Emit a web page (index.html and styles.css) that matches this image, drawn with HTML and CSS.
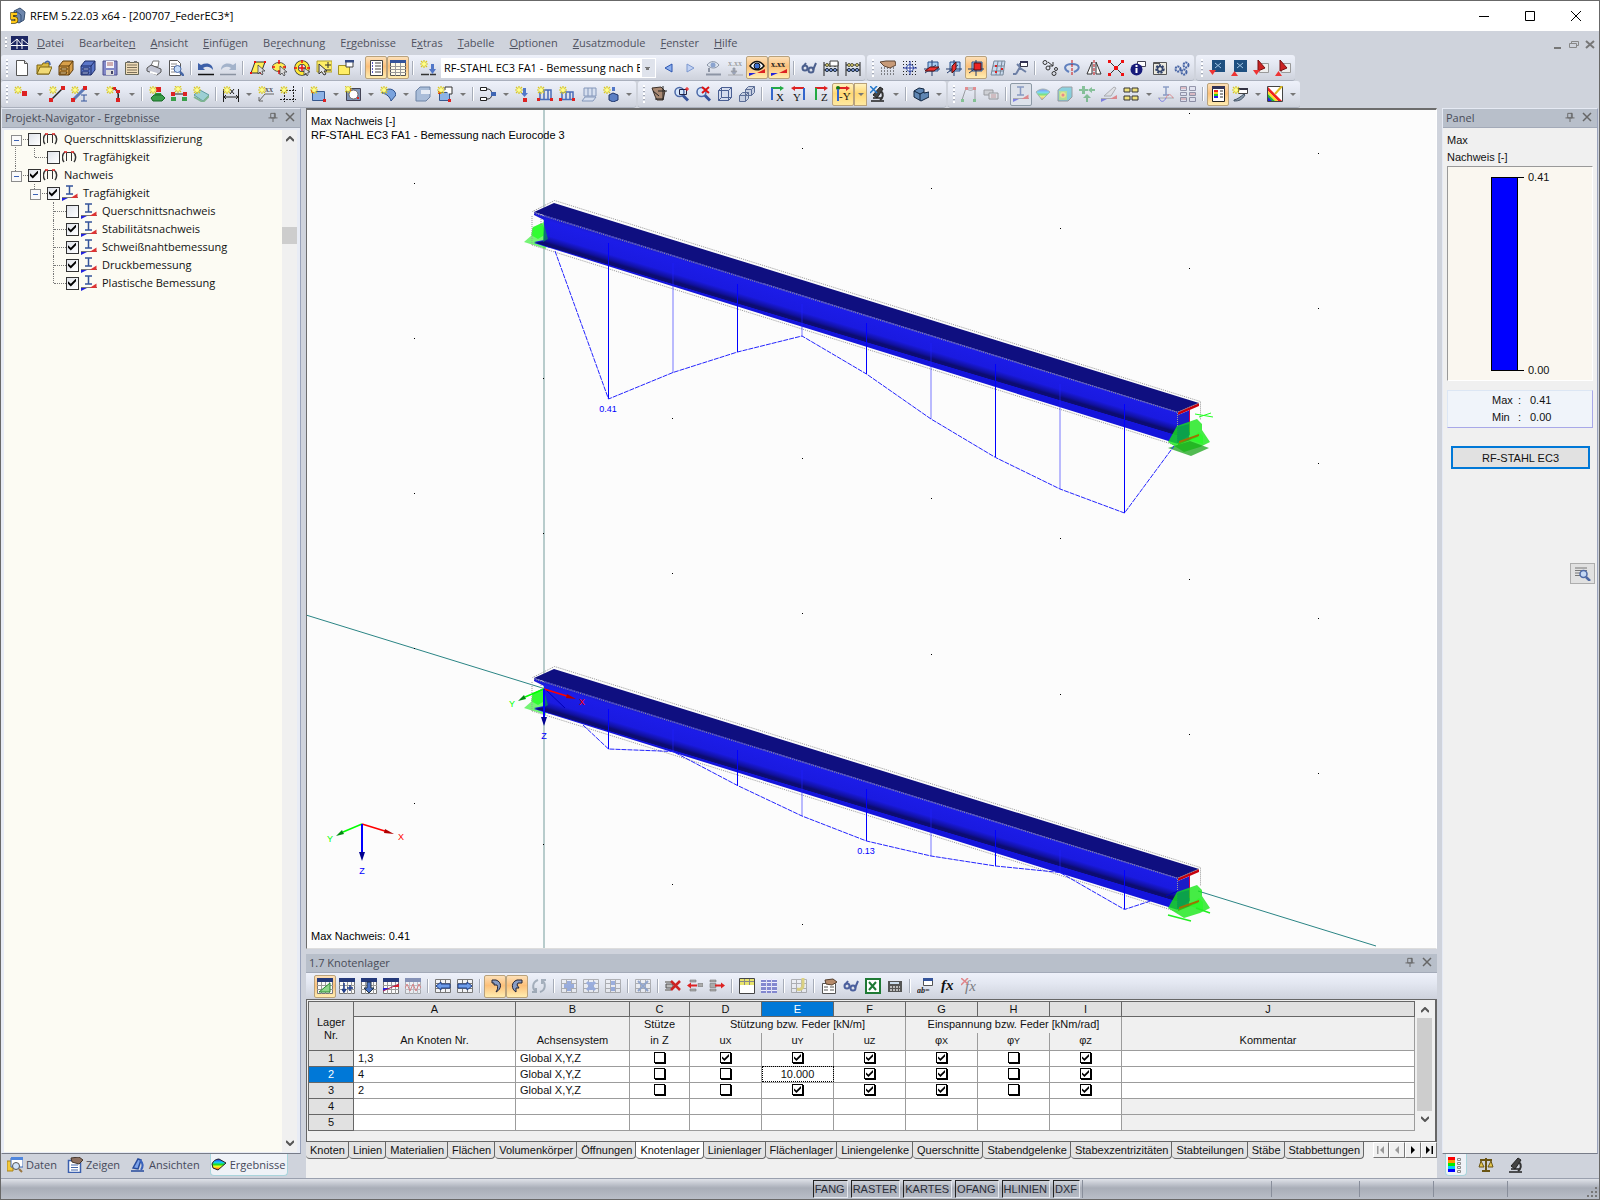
FILE: index.html
```html
<!DOCTYPE html>
<html lang="de">
<head>
<meta charset="utf-8">
<title>RFEM 5.22.03 x64 - [200707_FederEC3*]</title>
<link rel="stylesheet" href="styles.css">
</head>
<body>
<svg class="defs" aria-hidden="true">
  <defs>
    <g id="star"><path d="M4 0v8M0 4h8M1 1l6 6M7 1L1 7" stroke="#d9c81e" stroke-width="1.2"/><circle cx="4" cy="4" r="2" fill="#ffff8a"/></g>
    <g id="tbl"><path d="M.5.5h15v15H.5z" fill="#fafafa" stroke="#777"/><path d="M0 7.5h16M0 11.5h16M4.500 4v12M8.500 4v12M12.500 4v12" stroke="#999"/><path d="M0 0h16v4H0z" fill="#24397a"/></g>
    <g id="grd"><path d="M.5 1.500h15v13H.5zM.5 5.500h15M.5 10.500h15M5.500 1.500v13M10.500 1.500v13" fill="#f2f3f6" stroke="#777"/></g>
    <g id="lens"><circle cx="6.500" cy="6" r="4.500" fill="#d5e6fb" stroke="#4c69a8" stroke-width="1.500"/><path d="M10 9.500l5 5" stroke="#35529b" stroke-width="3"/></g>
    <g id="abacus"><path d="M1 2v14M15 2v14M1 5h14M1 10h14" stroke="#222" fill="none"/><g fill="#e8d76a" stroke="#554"><circle cx="4" cy="5" r="1.500"/><circle cx="7" cy="5" r="1.500"/><circle cx="12" cy="5" r="1.500"/></g><g fill="#7c95dc" stroke="#234"><circle cx="4" cy="10" r="1.600"/><circle cx="8" cy="10" r="1.600"/><circle cx="12" cy="10" r="1.600"/></g></g>
    <g id="nachweis"><path d="M4 1h7M7.500 1v8M4 9h7" stroke="#34549b" stroke-width="1.500"/><path d="M0 12.500h16" stroke="#777"/><path d="M0 16v-3h6z" fill="#22d"/><path d="M15.500 8.500V13h-7z" fill="#d33"/></g>
    <g id="klasse"><path d="M2 13C-.5 10 0 5 3 3M12 13c2.500-3 2-8-1-10" fill="none" stroke="#333" stroke-width="1.500"/><path d="M4.500 12V3.500h5V12" fill="none" stroke="#333"/><path d="M2 3h3M9 3h3" stroke="#d22" stroke-width="1.500"/></g>
    <g id="plane"><path d="M4 2h10v9H4z" fill="#a9cdf0" stroke="#28538f"/><path d="M1 13L12 5M8 0v16M0 9h16" stroke="#223a6b"/></g>
    <g id="pin"><path d="M2.500 1.500h5v5h-5zM0 6.500h10M5 7v4M6.500 1v5" fill="none" stroke="#666"/></g>
    <g id="cross"><path d="M1 1l8 8M9 1L1 9" stroke="#666" stroke-width="1.500"/></g>
    <g id="micro"><path d="M1 15h13M3 12h9" stroke="#222" stroke-width="1.500"/><path d="M3 9l7-8 3 2-6 9z" fill="#444" stroke="#222"/><path d="M11 5c3 3 2 7-1 9" fill="none" stroke="#333" stroke-width="2"/></g>
    <g id="ucs"><path d="M0 0l-19 8" stroke="#0f0" stroke-width="1.500"/><path d="M-26 12l6-6 2 4z" fill="#008c10"/><path d="M0 0l26 8" stroke="#f00" stroke-width="1.500"/><path d="M32 10l-9-5-1 4z" fill="#b00000"/><path d="M0 0v30" stroke="#00f" stroke-width="2"/><path d="M0 37l-3-9h6z" fill="#000090"/></g>
    <linearGradient id="web" gradientUnits="userSpaceOnUse" x1="534" y1="212" x2="525" y2="242"><stop offset="0" stop-color="#1a1acc"/><stop offset=".15" stop-color="#1c1ce8"/><stop offset=".6" stop-color="#1a1ae0"/><stop offset=".76" stop-color="#1111a0"/><stop offset=".84" stop-color="#0c0c70"/><stop offset=".92" stop-color="#0c0c74"/><stop offset=".94" stop-color="#1414dc"/><stop offset="1" stop-color="#1414dc"/></linearGradient>
    <linearGradient id="rainbow" y2="1" x2="0"><stop offset="0" stop-color="#22e"/><stop offset=".3" stop-color="#1cf"/><stop offset=".5" stop-color="#2d2"/><stop offset=".7" stop-color="#ff2"/><stop offset="1" stop-color="#f22"/></linearGradient>
    <g id="beam">
      <path d="M532 216v29M541 219v8" stroke="#999" stroke-dasharray="1 1"/>
      <path d="M534 212l10 4v4l-10-5zM534 242l10-2 6 8z" fill="#1a1ad8"/>
      <path d="M544 215l634 197v32L534 243l10-2z" fill="url(#web)"/>
      <path d="M534 212l20-9 645 200-21 9z" fill="#0f0f80"/>
      <path d="M1178 412l21-9v3l-21 9zM1178 443l20-8v2l-20 8z" fill="#c8000c"/>
      <path d="M1178 415l12-5v25l-12 8z" fill="#1c1cc8"/>
      <path d="M1189.500 410v22" stroke="#d0004a"/>
      <path d="M532.500 211.500l22-11 646 201v18M1177.500 444V412.500L534 213M1178 412l21-9M532 245l646 201" fill="none" stroke="#999" stroke-dasharray="1 1"/>
    </g>
    <g id="supl"><path d="M524 242l8-7 0-7 12-6 4 18-2 9z" fill="#2df02d" opacity=".65"/><path d="M533 227l9-4 4 11-8 5-7-4z" fill="#22ff22" opacity=".8"/></g>
    <g id="supl2"><path d="M544 224l4 15-5 3z" fill="#0a8a60" opacity=".8"/></g>
    <g id="supr"><path d="M1177 426l20-7 5 5v6l8 12-10 5-16 5-16-10z" fill="#16e716" opacity=".8"/><path d="M1177 427l12-3v16l-12 3z" fill="#0a9a50" opacity=".8"/><path d="M1190 440l9-8 4 4v8z" fill="#20ff20" opacity=".6"/><path d="M1179 441l20-7v2l-20 7z" fill="#a07000"/></g>
  </defs>
</svg>
<div class="app">
  <header class="title">
    <svg class="logo" viewBox="0 0 18 18"><path d="M5 4l6-3 5 4-1 8-5 3-4-2z" fill="#6d86ad" stroke="#39506f"/><path d="M7 4l5 4v7" stroke="#34507a" fill="none"/><path d="M8 7H3v4h2.500a2 2 0 010 4H2" fill="none" stroke="#554400" stroke-width="3.400"/><path d="M8 7H3v4h2.500a2 2 0 010 4H2" fill="none" stroke="#ffc918" stroke-width="2"/></svg>
    <h1>RFEM 5.22.03 x64 - [200707_FederEC3*]</h1>
    <div class="wctl">
      <button aria-label="Minimieren"><svg viewBox="0 0 10 10"><path d="M0 5.500h10" stroke="#000"/></svg></button>
      <button aria-label="Maximieren"><svg viewBox="0 0 10 10"><path d="M.5.5h9v9h-9z" fill="none" stroke="#000"/></svg></button>
      <button aria-label="Schließen"><svg viewBox="0 0 10 10"><path d="M0 0l10 10M10 0L0 10" stroke="#000"/></svg></button>
    </div>
  </header>
  <nav class="menu">
    <i class="grip"></i>
    <svg class="mlogo" viewBox="0 0 17 14"><path d="M0 0h17v14H0z" fill="#1d2763"/><path d="M0 9.500h17M0 8l6-5 5 6M6 3v10M11 13V3M11 3l6 5" fill="none" stroke="#fff"/></svg>
    <a href="#"><u>D</u>atei</a><a href="#">Bearbeite<u>n</u></a><a href="#"><u>A</u>nsicht</a><a href="#"><u>E</u>infügen</a><a href="#">Be<u>r</u>echnung</a><a href="#">E<u>r</u>gebnisse</a><a href="#">E<u>x</u>tras</a><a href="#"><u>T</u>abelle</a><a href="#"><u>O</u>ptionen</a><a href="#"><u>Z</u>usatzmodule</a><a href="#"><u>F</u>enster</a><a href="#"><u>H</u>ilfe</a>
    <div class="mdi">
      <button aria-label="Fenster minimieren"><svg viewBox="0 0 10 10"><path d="M1 8h7" stroke="#777" stroke-width="2"/></svg></button>
      <button aria-label="Fenster wiederherstellen"><svg viewBox="0 0 10 10"><path d="M2.500 3V1.500h7v4H8M.5 3.500h7v4h-7z" fill="none" stroke="#888"/></svg></button>
      <button aria-label="Fenster schließen"><svg viewBox="0 0 10 10"><path d="M1 1l8 7M9 1L1 8" stroke="#777" stroke-width="2"/></svg></button>
    </div>
  </nav>

  <div class="bars">
    <div class="bar">
      <i class="grip"></i>
      <button class="tb" aria-label="Neu"><svg viewBox="0 0 16 16"><path d="M2.500.5h8l3 3v12h-11z" fill="#fff" stroke="#555"/><path d="M10.500.5v3h3" fill="#ddd" stroke="#555"/></svg></button>
      <button class="tb" aria-label="Öffnen"><svg viewBox="0 0 16 16"><path d="M1 14V5h5l1-2h6v11z" fill="#d9b943" stroke="#7c6512"/><path d="M1 14l3-7h12l-3 7z" fill="#f1da76" stroke="#7c6512"/><path d="M9 3c2-3 5-2 5 2" fill="none" stroke="#4465aa" stroke-width="1.500"/></svg></button>
      <button class="tb" aria-label="Block laden"><svg viewBox="0 0 16 16"><path d="M1 6l4-5h10v9l-4 5H1z" fill="#d9a04a" stroke="#5c3a0a"/><path d="M1 6h10v9M11 6l4-5" fill="none" stroke="#5c3a0a"/><path d="M3 8h6v2H3zM2 12h7l-1 2H2z" fill="#f8dca4" stroke="#5c3a0a"/></svg></button>
      <button class="tb" aria-label="Block speichern"><svg viewBox="0 0 16 16"><path d="M1 6l4-5h10v9l-4 5H1z" fill="#5b76c8" stroke="#1e2c66"/><path d="M1 6h10v9M11 6l4-5" fill="none" stroke="#1e2c66"/><path d="M3 8h6v2H3zM2 12h7l-1 2H2z" fill="#bccaf2" stroke="#1e2c66"/></svg></button>
      <button class="tb" aria-label="Speichern"><svg viewBox="0 0 16 16"><path d="M1 1h14v14H1z" fill="#8288c8" stroke="#4c4f8c"/><path d="M4 1h8v7H4z" fill="#f4f4fb"/><path d="M5 3h6M5 5h6" stroke="#a66"/><path d="M4 10h8v5H4z" fill="#ddd"/><path d="M9 11h2v3H9z" fill="#446"/></svg></button>
      <button class="tb" aria-label="Klemmbrett"><svg viewBox="0 0 16 16"><path d="M1.500 2.500h13v12h-13z" fill="#efdcb8" stroke="#665"/><path d="M3 5h10M3 7.500h10M3 10h10M3 12.500h10" stroke="#7c705a"/><path d="M3 1h3v2H3zM10 1h3v2h-3z" fill="#777"/></svg></button>
      <button class="tb" aria-label="Drucken"><svg viewBox="0 0 16 16"><path d="M5 6l2-5h6l-1 6z" fill="#fff" stroke="#777"/><path d="M1 8l4-3 10 4v3l-4 3-10-4z" fill="#c3c6d4" stroke="#555"/><path d="M4 12l7 2" stroke="#fff" stroke-width="2"/></svg></button>
      <button class="tb" aria-label="Seitenansicht"><svg viewBox="0 0 16 16"><path d="M1.500.5h8l3 3v12h-11z" fill="#fff" stroke="#555"/><path d="M3 4h6M3 6.500h6M3 9h4M3 12h4" stroke="#888"/><circle cx="9.500" cy="9" r="3.500" fill="#c5dcf8" stroke="#4767a6"/><path d="M12 12l4 4" stroke="#4767a6" stroke-width="2.500"/></svg></button>
      <i class="sep"></i>
      <button class="tb" aria-label="Rückgängig"><svg viewBox="0 0 16 16"><path d="M0 3v7h7L5 8c3-2 7-2 10 2 0-6-6-8-12-5z" fill="#3c5fa8"/><path d="M0 14.500h16" stroke="#111" stroke-width="1.500"/></svg></button>
      <button class="tb" aria-label="Wiederholen"><svg viewBox="0 0 16 16"><path d="M16 3v7H9l2-2C8 6 4 6 1 10c0-6 6-8 12-5z" fill="#a3b3cb"/><path d="M0 14.500h16" stroke="#8a93a1" stroke-width="1.500"/></svg></button>
      <i class="sep"></i>
      <button class="tb" aria-label="Auswahl Fläche"><svg viewBox="0 0 16 16"><path d="M5 2h10l-4 11H1z" fill="#ffee55" stroke="#333"/><path d="M4 1h2v2H4zM14 1h2v2h-2zM0 12h2v2H0zM10 12h2v2h-2z" fill="#e11"/><path d="M8 5v9l2-2 2 3 1-1-1-3h3z" fill="#ddd" stroke="#333" stroke-width=".7"/></svg></button>
      <button class="tb" aria-label="Auswahl Ellipse"><svg viewBox="0 0 16 16"><ellipse cx="7" cy="7" rx="6.500" ry="4.500" fill="#ffee55" stroke="#555"/><path d="M7 0v4M0 7h3M11 7h3M7 10v4" stroke="#e11" stroke-width="1.500"/><path d="M8 6v9l2-2 2 3 1-1-1-3h3z" fill="#ddd" stroke="#333" stroke-width=".7"/></svg></button>
      <button class="tb" aria-label="Auswahl Ring"><svg viewBox="0 0 16 16"><circle cx="8" cy="8" r="5.500" fill="none" stroke="#333" stroke-width="4.500"/><circle cx="8" cy="8" r="5.500" fill="none" stroke="#ffe838" stroke-width="3"/><path d="M8 5v6M5 8h6M8 0v3M0 8h3M13 8h3" stroke="#e11" stroke-width="1.500"/><path d="M10 8v7l2-2 1 3 1-1v-3h2z" fill="#ddd" stroke="#333" stroke-width=".7"/></svg></button>
      <button class="tb" aria-label="Auswahl plus minus"><svg viewBox="0 0 16 16"><path d="M1 1h15v11H1z" fill="#ffee66" stroke="#b0a030"/><path d="M12 2v6M9 5h6M9 10h6" stroke="#333"/><path d="M3 4v10l2.500-2.500L8 15l2-1-2-3h3z" fill="#e6e6e6" stroke="#333"/></svg></button>
      <button class="tb" aria-label="Auswahl speziell"><svg viewBox="0 0 16 16"><path d="M.5 5.500h11v9H.5z" fill="#ffee66" stroke="#a39326"/><path d="M8 1h7v6H8z" fill="#fff" stroke="#444"/><path d="M7 0h9v2.500H7z" fill="#334a85"/></svg></button>
      <i class="sep"></i>
      <button class="tb on" aria-label="Navigator"><svg viewBox="0 0 16 16"><path d="M2.500.5h12v15h-12z" fill="#fff" stroke="#444"/><path d="M4 3h1M4 6h1M4 9h1M4 12h1" stroke="#22a" stroke-width="1.500"/><path d="M7 3h6M7 6h6M7 9h6M7 12h6" stroke="#444"/></svg></button>
      <button class="tb on" aria-label="Tabellen"><svg viewBox="0 0 16 16"><path d="M.5.5h15v15H.5z" fill="#fffbe8" stroke="#555"/><path d="M0 0h16v3H0z" fill="#34549b"/><path d="M0 6.500h16M0 9.500h16M0 12.500h16M5.500 3v13M10.500 3v13" stroke="#999"/></svg></button>
      <i class="sep"></i>
      <button class="tb" aria-label="Lastfall neu"><svg viewBox="0 0 16 16"><use href="#star"/><path d="M1 14.500h8M10 14.500h6" stroke="#333" stroke-width="1.500"/><path d="M11 4h3v5h2l-3.500 5L9 9h2z" fill="#5277c8"/></svg></button>
      <select class="lf" aria-label="Lastfall"><option>RF-STAHL EC3 FA1 - Bemessung nach E</option></select>
      <button class="tb" aria-label="Vorheriger"><svg viewBox="0 0 16 16"><path d="M11 4v8L4 8z" fill="#8db0ee" stroke="#2c55b0"/></svg></button>
      <button class="tb" aria-label="Nächster"><svg viewBox="0 0 16 16"><path d="M4 4v8l7-4z" fill="#c0d2f4" stroke="#7d98cf"/></svg></button>
      <button class="tb" aria-label="Verformungen"><svg viewBox="0 0 16 16"><path d="M2 5c4-5 9-4 12 0-3 4-8 4-12 0z" fill="#dde5ef" stroke="#8993a5"/><circle cx="8" cy="5" r="2.500" fill="#8aa3cf"/><path d="M4 8v4M1 14.500h15" stroke="#8d95a5" stroke-width="2"/></svg></button>
      <button class="tb" aria-label="Lastwerte"><svg viewBox="0 0 16 16"><text x="1" y="6" class="t8 gry">x.xx</text><path d="M6 8h2v4H6zM4 11h6l-3 4zM1 15h15" fill="#9aa8c8" stroke="#999" stroke-width=".7"/></svg></button>
      <button class="tb on" aria-label="Ergebnisse anzeigen"><svg viewBox="0 0 16 16"><path d="M1 6c4-6 10-6 14 0-4 5-10 5-14 0z" fill="#fff" stroke="#111" stroke-width="1.500"/><circle cx="8" cy="6" r="3" fill="#3d6fd0" stroke="#111"/><path d="M0 16v-3h7z" fill="#22d"/><path d="M16 9v4H8z" fill="#d22"/></svg></button>
      <button class="tb on" aria-label="Ergebniswerte"><svg viewBox="0 0 16 16"><text x="0" y="7" class="t8 b">x.xx</text><path d="M0 16v-3h7z" fill="#22d"/><path d="M16 9v4H8z" fill="#d22"/></svg></button>
      <i class="sep"></i>
      <button class="tb" aria-label="Brille"><svg viewBox="0 0 16 16"><g fill="none" stroke="#4b5f8d" stroke-width="2"><circle cx="4" cy="8" r="2.500"/><circle cx="10" cy="10" r="2.500"/><path d="M6 9h2M5 3L2 7M15 3l-3 7"/></g></svg></button>
      <button class="tb" aria-label="Berechnungsparameter"><svg viewBox="0 0 16 16"><use href="#abacus"/><path d="M7 1h8v5H7z" fill="#fff" stroke="#444"/></svg></button>
      <button class="tb" aria-label="Berechnen"><svg viewBox="0 0 16 16"><use href="#abacus"/></svg></button>
    </div>
    <div class="bar">
      <i class="grip"></i>
      <button class="tb" aria-label="Arbeitsebene einstellen"><svg viewBox="0 0 16 16"><path d="M1 8h14M1 11h14M1 14h14" stroke="#222" stroke-dasharray="1 2" stroke-width="1"/><path d="M0 2l6-1h9l1 4-6 3-6-2z" fill="#c79a78" stroke="#5e4636"/></svg></button>
      <button class="tb" aria-label="Raster"><svg viewBox="0 0 16 16"><path d="M1 1.500h14M1 4.500h14M1 7.500h14M1 11.500h14M1 14.500h14" stroke="#222" stroke-dasharray="1 2"/><circle cx="8" cy="8" r="3.500" fill="#fff" stroke="#2d4ba3"/><path d="M8 1v14M1 8h14" stroke="#2436a0"/></svg></button>
      <button class="tb" aria-label="Ebene XY"><svg viewBox="0 0 16 16"><use href="#plane"/><path d="M1 11l5-4h9l-5 4z" fill="#e33" stroke="#511"/></svg></button>
      <button class="tb" aria-label="Ebene YZ"><svg viewBox="0 0 16 16"><use href="#plane"/><path d="M6 13V6l4-4v7z" fill="#e33" stroke="#511"/></svg></button>
      <button class="tb on" aria-label="Ebene XZ"><svg viewBox="0 0 16 16"><use href="#plane"/><path d="M6 3h7v7H6z" fill="#e22" stroke="#511"/></svg></button>
      <button class="tb" aria-label="Hilfslinien"><svg viewBox="0 0 16 16"><path d="M4 1h11l-2 14H1zM8 1L6 15M12 1l-2 14M3 6h11M2 11h12" fill="#c9daee" stroke="#789"/><path d="M5 5h2v2H5zM11 8h2v2h-2zM5 11h2v2H5z" fill="#d22"/></svg></button>
      <button class="tb" aria-label="Koordinatensystem"><svg viewBox="0 0 16 16"><path d="M4 14l4-7M8 7L5 4M8 8l6 4M4 14H1M8 8V3" stroke="#6d7fa5" stroke-width="2"/><path d="M8.500 1.500h7v5h-7z" fill="#fff" stroke="#334"/><path d="M8 1h8v2H8z" fill="#335"/></svg></button>
      <i class="sep"></i>
      <button class="tb" aria-label="Verschieben"><svg viewBox="0 0 16 16"><g fill="none" stroke="#333"><circle cx="3" cy="2.500" r="2"/><circle cx="6" cy="8" r="2"/><circle cx="14" cy="9" r="1.500"/><circle cx="12" cy="13.500" r="2"/></g><path d="M6 2l5 4M11 2v4H7" stroke="#333" fill="none"/></svg></button>
      <button class="tb" aria-label="Drehen"><svg viewBox="0 0 16 16"><path d="M5 12C-1 9 0 4 8 4s9 5 2 8" fill="none" stroke="#6080be" stroke-width="2"/><path d="M8 0v16" stroke="#c11" stroke-dasharray="3 1"/></svg></button>
      <button class="tb" aria-label="Spiegeln"><svg viewBox="0 0 16 16"><path d="M6 2v12H1zM10 2v12h5z" fill="#fff" stroke="#333"/><path d="M8 0v16" stroke="#c11" stroke-dasharray="3 1"/></svg></button>
      <button class="tb" aria-label="Schneiden"><svg viewBox="0 0 16 16"><path d="M2 2l12 12M14 2L2 14" stroke="#333"/><path d="M0 0h3v3H0zM13 0h3v3h-3zM0 13h3v3H0zM13 13h3v3h-3zM6 6h4v4H6z" fill="#e11"/></svg></button>
      <button class="tb" aria-label="Info"><svg viewBox="0 0 16 16"><path d="M7.500 1.500h8v5h-8z" fill="#fff" stroke="#445"/><circle cx="6.500" cy="9.500" r="6" fill="#171a7a"/><path d="M6.500 5v2M6.500 8v5" stroke="#fff" stroke-width="2"/></svg></button>
      <button class="tb" aria-label="Einstellungen"><svg viewBox="0 0 16 16"><path d="M1.500 2.500h13v12h-13z" fill="#eceadf" stroke="#555"/><path d="M2 2h6v2H2z" fill="#555"/><circle cx="8" cy="9" r="3.500" fill="none" stroke="#34456d" stroke-width="2.500" stroke-dasharray="2 1"/><circle cx="8" cy="9" r="2.500" fill="none" stroke="#34456d" stroke-width="1.500"/></svg></button>
      <button class="tb" aria-label="Werkzeuge"><svg viewBox="0 0 16 16"><g fill="none" stroke="#4664a5" stroke-width="2"><circle cx="4" cy="9" r="2.500" stroke-dasharray="2 .7"/><circle cx="12" cy="5" r="2.500" stroke-dasharray="2 .7"/><circle cx="10" cy="12" r="2.500" stroke-dasharray="2 .7"/></g></svg></button>
    </div>
    <div class="bar">
      <i class="grip"></i>
      <button class="tb" aria-label="DXF Import"><svg viewBox="0 0 16 16"><path d="M3 0h13v12H3z" fill="#1e4f80"/><path d="M6 3l6 5M12 3L6 8" stroke="#9fc4e4"/><path d="M0 10h7l-3.500 5z" fill="#e33"/></svg></button>
      <button class="tb" aria-label="DXF Export"><svg viewBox="0 0 16 16"><path d="M3 0h13v12H3z" fill="#1e4f80"/><path d="M6 3l6 5M12 3L6 8" stroke="#9fc4e4"/><path d="M0 16h7l-3.500-5z" fill="#e33"/></svg></button>
      <button class="tb" aria-label="CAD Import"><svg viewBox="0 0 16 16"><path d="M6.500 3.500h9v9h-9z" fill="#eee" stroke="#999"/><path d="M5 0l7 8-7 3z" fill="#c22" stroke="#711"/><path d="M0 10h7l-3.500 5z" fill="#e33"/></svg></button>
      <button class="tb" aria-label="CAD Export"><svg viewBox="0 0 16 16"><path d="M6.500 3.500h9v9h-9z" fill="#eee" stroke="#999"/><path d="M5 0l7 8-7 3z" fill="#c22" stroke="#711"/><path d="M0 16h7l-3.500-5z" fill="#e33"/></svg></button>
    </div>
  </div>

  <div class="bars">
    <div class="bar">
      <i class="grip"></i>
      <button class="tb" aria-label="Knoten neu"><svg viewBox="0 0 16 16"><use href="#star"/><path d="M8 5h5v5H8z" fill="#d22"/></svg></button><button class="dd" aria-label="Mehr"></button>
      <button class="tb" aria-label="Linie neu"><svg viewBox="0 0 16 16"><path d="M2 14L14 2" stroke="#222" stroke-width="1.500"/><path d="M0 12h4v4H0zM12 0h4v4h-4z" fill="#d22"/><use href="#star"/></svg></button>
      <button class="tb" aria-label="Stab neu"><svg viewBox="0 0 16 16"><path d="M2 14L14 2" stroke="#5d7ab8" stroke-width="3"/><path d="M0 12h4v4H0zM12 0h4v4h-4z" fill="#d22"/><path d="M10 9h6M13 9v6M10 15h6" stroke="#34549b"/><use href="#star"/></svg></button><button class="dd" aria-label="Mehr"></button>
      <button class="tb" aria-label="Bogen neu"><svg viewBox="0 0 16 16"><path d="M6 2c6 1 7 6 6 11" fill="none" stroke="#222" stroke-width="1.500"/><path d="M7 1h3v3H7zM10 4h4v3h-4zM10 12h4v4h-4z" fill="#d22"/><use href="#star"/></svg></button><button class="dd" aria-label="Mehr"></button>
      <i class="sep"></i>
      <button class="tb" aria-label="Knotenlager"><svg viewBox="0 0 16 16"><path d="M7 1h5v5H7z" fill="#d22"/><path d="M6 7h6l1 4H5z" fill="#2b9a3c"/><path d="M2 12l3-3h8l3 3-3 3H4z" fill="#3a9e49" stroke="#186a26"/><use href="#star"/></svg></button>
      <button class="tb" aria-label="Linienlager"><svg viewBox="0 0 16 16"><path d="M2 8h12" stroke="#222"/><path d="M0 6h4v4H0zM12 6h4v4h-4z" fill="#d22"/><path d="M0 11h5v4H0zM11 11h5v4h-5z" fill="#3a9e49"/><use href="#star" x="3" y="-1"/></svg></button>
      <button class="tb" aria-label="Flächenlager"><svg viewBox="0 0 16 16"><path d="M1 9l6-5 9 5-6 6z" fill="#9ccfd4" stroke="#5c9aa0"/><path d="M1 11l9 5 6-6" fill="none" stroke="#7fb592" stroke-width="2"/><use href="#star"/></svg></button>
      <i class="sep"></i>
      <button class="tb" aria-label="Bemaßung"><svg viewBox="0 0 16 16"><path d="M.5 3v13M15.500 3v13M1 11h14M3 9l-2 2 2 2M13 9l2 2-2 2M7 3l4 5M11 3L7 8" fill="none" stroke="#222"/><use href="#star"/></svg></button><button class="dd" aria-label="Mehr"></button>
      <button class="tb" aria-label="Kommentar"><svg viewBox="0 0 16 16"><path d="M1 15l6-7h9M1 11v4h4" fill="none" stroke="#666"/><text x="7" y="6" class="t8">xx</text><use href="#star"/></svg></button>
      <button class="tb" aria-label="Hilfslinie"><svg viewBox="0 0 16 16"><path d="M4.500 3v13M13.500 0v16M0 4.500h16M0 13.500h16" stroke="#222" stroke-dasharray="2 1"/><use href="#star"/></svg></button>
      <i class="sep"></i>
      <button class="tb" aria-label="Fläche neu"><svg viewBox="0 0 16 16"><path d="M2.500 5.500h12v9h-12z" fill="#8db3e6" stroke="#36588e"/><path d="M1 4h3v3H1zM13 13h3v3h-3z" fill="#d22"/><use href="#star"/></svg></button><button class="dd" aria-label="Mehr"></button>
      <button class="tb" aria-label="Öffnung"><svg viewBox="0 0 16 16"><path d="M1.500 2.500h14v12h-14z" fill="#8095b6" stroke="#445"/><circle cx="8.500" cy="8.500" r="4.500" fill="#fff" stroke="#666"/><path d="M4 3h2v2H4zM12 11h2v2h-2z" fill="#d22"/><use href="#star" x="-1" y="-1"/></svg></button><button class="dd" aria-label="Mehr"></button>
      <button class="tb" aria-label="Rotationsfläche"><svg viewBox="0 0 16 16"><path d="M2 7c5-6 13-5 14 2l-5 6C10 11 7 8 2 7z" fill="#7aa3dd" stroke="#2d4f8a"/><use href="#star"/></svg></button><button class="dd" aria-label="Mehr"></button>
      <button class="tb" aria-label="Volumen"><svg viewBox="0 0 16 16"><path d="M1 5l4-4h10v10l-4 4H1z" fill="#a9bdd9" stroke="#6d83a5"/><path d="M6 4h9v4H6z" fill="#e6ecf5"/></svg></button>
      <button class="tb" aria-label="Körper"><svg viewBox="0 0 16 16"><path d="M2.500 6.500h10v8h-10z" fill="#8db3e6" stroke="#36588e"/><path d="M8 4V1h7v7h-3" fill="#fff" stroke="#333"/><path d="M1 5h3v3H1zM11 13h3v3h-3z" fill="#d22"/><use href="#star"/></svg></button><button class="dd" aria-label="Mehr"></button>
      <i class="sep"></i>
      <button class="tb" aria-label="Verbindung"><svg viewBox="0 0 16 16"><path d="M.5 1.500h6v3h-6zM.5 11.500h6v3h-6z" fill="#fff" stroke="#222"/><path d="M7 3c4 0 4 2 5 4M7 13c4 0 4-2 5-4" fill="none" stroke="#222"/><path d="M11 6h5v4h-5z" fill="#3f66b3"/></svg></button><button class="dd" aria-label="Mehr"></button>
      <button class="tb" aria-label="Knotenlast"><svg viewBox="0 0 16 16"><path d="M8 2h3v5h2l-3.500 4L6 7h2z" fill="#5277c8"/><path d="M8 12h4v4H8z" fill="#d22"/><use href="#star"/></svg></button>
      <button class="tb" aria-label="Stablast"><svg viewBox="0 0 16 16"><path d="M3 13V4h11v9M7 4v9M11 4v9M1 13.500h14" fill="none" stroke="#4a6cb8" stroke-width="1.500"/><path d="M0 12h3v3H0zM13 12h3v3h-3z" fill="#d22"/><use href="#star"/></svg></button>
      <button class="tb" aria-label="Linienlast"><svg viewBox="0 0 16 16"><path d="M3 13V6h11v7M7 6v7M11 6v7M1 13.500h14" fill="none" stroke="#4a6cb8" stroke-width="1.500"/><path d="M0 12h3v3H0zM13 12h3v3h-3z" fill="#d22"/><use href="#star"/></svg></button>
      <button class="tb" aria-label="Flächenlast"><svg viewBox="0 0 16 16"><path d="M3 2h12v8H3zM7 2v8M11 2v8M1 15l3-4h11l-3 4z" fill="#d6dfef" stroke="#8497ba"/></svg></button>
      <button class="tb" aria-label="Volumenlast"><svg viewBox="0 0 16 16"><path d="M6 9l4-2 5 2v5l-5 2-4-2z" fill="#5b7fc4" stroke="#1f356b"/><path d="M9 1h3v4h-3z" fill="#5277c8"/><use href="#star"/></svg></button><button class="dd" aria-label="Mehr"></button>
    </div>
    <div class="bar">
      <i class="grip"></i>
      <button class="tb" aria-label="Ansicht bewegen"><svg viewBox="0 0 16 16"><path d="M1 2l9-1 4 4-2 9H6l-2-4z" fill="#a98973" stroke="#3c3029"/><path d="M12 0v14M7 5h9M2 5l6 5M4 13h8" stroke="#222"/></svg></button>
      <button class="tb" aria-label="Zoom Fenster"><svg viewBox="0 0 16 16"><use href="#lens"/><path d="M6.500 3.500h7v5h-7z" fill="none" stroke="#224"/><path d="M12 3h4M14 1v4" stroke="#e11"/></svg></button>
      <button class="tb" aria-label="Alles zeigen"><svg viewBox="0 0 16 16"><use href="#lens"/><path d="M7 1l7 6M14 1L7 7" stroke="#d11" stroke-width="2"/></svg></button>
      <button class="tb" aria-label="Isometrie"><svg viewBox="0 0 16 16"><path d="M1.500 4.500h10v10h-10zM1.500 4.500l3-3h10v10l-3 3M11.500 4.500l3-3M4.500 1.500v10h10M1.500 14.500l3-3" fill="#d3dbee" stroke="#4a5f93"/></svg></button>
      <button class="tb" aria-label="Perspektive"><svg viewBox="0 0 16 16"><path d="M6.500 3.500l3-3h6v6l-3 3h-6zM.5 9.500l3-3h6v6l-3 3h-6z" fill="#c6cfe2" stroke="#5c6e97"/><path d="M6.500 3.500h6v6M12.500 3.500l3-3M.5 9.500h6v6M6.500 9.500l3-3" fill="none" stroke="#5c6e97"/></svg></button>
      <i class="sep"></i>
      <button class="tb" aria-label="Ansicht X"><svg viewBox="0 0 16 16"><path d="M2 2h10" stroke="#2a4" stroke-width="2"/><path d="M11 0l4 2-4 3z" fill="#2a4"/><path d="M3 2v12" stroke="#36c" stroke-width="2"/><text x="7" y="15" class="t10">X</text></svg></button>
      <button class="tb" aria-label="Ansicht Y"><svg viewBox="0 0 16 16"><path d="M3 2h10" stroke="#d22" stroke-width="2"/><path d="M4 0L0 2l4 3z" fill="#d22"/><path d="M13 2v12" stroke="#36c" stroke-width="2"/><text x="2" y="15" class="t10">Y</text></svg></button>
      <button class="tb" aria-label="Ansicht Z"><svg viewBox="0 0 16 16"><path d="M2 2h10" stroke="#d22" stroke-width="2"/><path d="M11 0l4 2-4 3z" fill="#d22"/><path d="M3 2v12" stroke="#2a4" stroke-width="2"/><text x="8" y="15" class="t10">Z</text></svg></button>
      <button class="tb hot" aria-label="Ansicht -Y"><svg viewBox="0 0 16 16"><path d="M2 2h10" stroke="#d22" stroke-width="2"/><path d="M11 0l4 2-4 3z" fill="#d22"/><circle cx="3" cy="2" r="2" fill="#171"/><path d="M3 3v12" stroke="#36c" stroke-width="2"/><text x="4" y="14" class="t10">-Y</text></svg></button><button class="dd hot" aria-label="Mehr"></button>
      <button class="tb" aria-label="Darstellung"><svg viewBox="0 0 16 16"><use href="#micro"/><path d="M0 0l7 7M7 0L0 7" stroke="#27c" stroke-width="1.500"/></svg></button><button class="dd" aria-label="Mehr"></button>
      <i class="sep"></i>
      <button class="tb" aria-label="Volumenmodell"><svg viewBox="0 0 16 16"><path d="M1 5l5-3 5 1 0 4 5-1v5l-8 4-7-4z" fill="#5f86b3" stroke="#10243e"/><path d="M1 5l6 3v6M7 8l4-2" stroke="#10243e" fill="none"/></svg></button><button class="dd" aria-label="Mehr"></button>
    </div>
    <div class="bar">
      <i class="grip"></i>
      <button class="tb dim" aria-label="Verformung"><svg viewBox="0 0 16 16"><path d="M1 14L5 2h9v12M5 2c3 3 6 3 9 0" fill="none" stroke="#555"/><path d="M4 1h3v3H4zM12 1h3v3h-3z" fill="#d33"/><path d="M0 13h3v3H0zM12 13h3v3h-3z" fill="#3a4"/></svg></button>
      <button class="tb dim" aria-label="Dehnung"><svg viewBox="0 0 16 16"><path d="M1 4h9v5H1z" fill="#bbb" stroke="#555"/><path d="M6 7h9v6H6z" fill="#ddd" stroke="#555"/><path d="M8 9h5M8 11h5" stroke="#a55"/></svg></button>
      <i class="sep"></i>
      <button class="tb sel dim" aria-label="Schnittgrößen"><svg viewBox="0 0 16 16"><use href="#nachweis"/></svg></button>
      <button class="tb dim" aria-label="Flächenergebnisse"><svg viewBox="0 0 16 16"><path d="M1 6c4-4 10-4 14 0l-8 8z" fill="url(#rainbow)" stroke="#687"/></svg></button>
      <button class="tb dim" aria-label="Volumenergebnisse"><svg viewBox="0 0 16 16"><path d="M1 4l4-3h10v10l-4 4H1z" fill="#3bc" stroke="#555"/><path d="M2 5h8v9H2z" fill="#8d4"/><circle cx="6" cy="9" r="3" fill="#fd3"/><circle cx="6" cy="9" r="1.500" fill="#e33"/></svg></button>
      <button class="tb dim" aria-label="Lagerreaktionen"><svg viewBox="0 0 16 16"><path d="M3 0h3v3h3v2H6v3H3V5H0V3h3zM9 4l4-3v2h3v2h-3v2zM7 16V12H4l4-4 4 4H9v4z" fill="#2a9a44"/></svg></button>
      <button class="tb dim" aria-label="Spannungen"><svg viewBox="0 0 16 16"><path d="M3 10L13 1l2 1-5 8z" fill="#ddd" stroke="#777"/><path d="M0 12.500h16" stroke="#777"/><path d="M0 16v-3h6z" fill="#22d"/><path d="M16 9v4H9z" fill="#d33"/></svg></button>
      <button class="tb" aria-label="Glättung"><svg viewBox="0 0 16 16"><path d="M1 2h6v4H1zM9 2h6v4H9zM1 10h6v4H1zM9 10h6v4H9z" fill="#f0e27c" stroke="#333"/></svg></button><button class="dd" aria-label="Mehr"></button>
      <button class="tb dim" aria-label="Ergebnisverläufe"><svg viewBox="0 0 16 16"><path d="M5 1h6M8 1v8M5 9h6" stroke="#34549b" stroke-width="1.500"/><path d="M0 12h16" stroke="#777"/><path d="M1 12c2 5 5 4 7 0" fill="none" stroke="#22d"/><path d="M8 12c2-5 5-4 7 0" fill="none" stroke="#d33"/></svg></button>
      <button class="tb dim" aria-label="Mehrere Verläufe"><svg viewBox="0 0 16 16"><path d="M.5.5h6v4h-6zM9.500.5h6v4h-6zM.5 6.500h6v3h-6zM9.500 6.500h6v3h-6zM.5 11.500h6v4h-6zM9.500 11.500h6v4h-6z" fill="#dde" stroke="#446"/><path d="M1 2h5M10 8h5M1 13h5" stroke="#c44"/></svg></button>
      <i class="sep"></i>
      <button class="tb on" aria-label="Panel"><svg viewBox="0 0 16 16"><path d="M2.500.5h12v15h-12z" fill="#fff" stroke="#222"/><path d="M2 0h13v3H2z" fill="#335"/><path d="M4 5h4" stroke="#e22" stroke-width="2"/><path d="M4 7h4" stroke="#fc2" stroke-width="2"/><path d="M4 9h4" stroke="#2c2" stroke-width="2"/><path d="M4 11h4" stroke="#22e" stroke-width="2"/><path d="M10 5h3M10 8h3M10 11h3" stroke="#333"/></svg></button>
      <button class="tb" aria-label="Neues Fenster"><svg viewBox="0 0 16 16"><path d="M6.500 2.500h9v5h-9z" fill="#fff" stroke="#444"/><path d="M6 2h10v2H6z" fill="#334"/><path d="M2 14c4-1 6-3 10-6l1 1c-3 5-6 6-11 6z" fill="#89a" stroke="#456"/><use href="#star"/></svg></button><button class="dd" aria-label="Mehr"></button>
      <button class="tb" aria-label="Farben"><svg viewBox="0 0 16 16"><path d="M.5.5h15v15H.5z" fill="#fff" stroke="#444"/><path d="M1 1l14 14h-4L1 5z" fill="#e22"/><path d="M1 5l10 10H8L1 8z" fill="#fd2"/><path d="M1 8l7 7H4L1 12z" fill="#2b3"/><path d="M1 11l4 4H1z" fill="#22d"/><path d="M8 8l7-8" stroke="#db2" stroke-width="2"/></svg></button><button class="dd" aria-label="Mehr"></button>
    </div>
  </div>

  <main class="main">
    <aside class="nav">
      <div class="dock">
        <header class="cap"><h2>Projekt-Navigator - Ergebnisse</h2><button aria-label="Anheften"><svg viewBox="0 0 10 11"><use href="#pin"/></svg></button><button aria-label="Schließen"><svg viewBox="0 0 10 10"><use href="#cross"/></svg></button></header>
        <div class="treebox">
          <ul class="tree">
            <li><div class="row"><i class="exp"></i><label><input type="checkbox"><svg viewBox="0 0 16 16"><use href="#klasse"/></svg><span>Querschnittsklassifizierung</span></label></div>
              <ul><li><div class="row"><i class="leaf"></i><label><input type="checkbox"><svg viewBox="0 0 16 16"><use href="#klasse"/></svg><span>Tragfähigkeit</span></label></div></li></ul></li>
            <li><div class="row"><i class="exp"></i><label><input type="checkbox" checked><svg viewBox="0 0 16 16"><use href="#klasse"/></svg><span>Nachweis</span></label></div>
              <ul><li><div class="row"><i class="exp"></i><label><input type="checkbox" checked><svg viewBox="0 0 16 16"><use href="#nachweis"/></svg><span>Tragfähigkeit</span></label></div>
                <ul>
                  <li><div class="row"><i class="leaf"></i><label><input type="checkbox"><svg viewBox="0 0 16 16"><use href="#nachweis"/></svg><span>Querschnittsnachweis</span></label></div></li>
                  <li><div class="row"><i class="leaf"></i><label><input type="checkbox" checked><svg viewBox="0 0 16 16"><use href="#nachweis"/></svg><span>Stabilitätsnachweis</span></label></div></li>
                  <li><div class="row"><i class="leaf"></i><label><input type="checkbox" checked><svg viewBox="0 0 16 16"><use href="#nachweis"/></svg><span>Schweißnahtbemessung</span></label></div></li>
                  <li><div class="row"><i class="leaf"></i><label><input type="checkbox" checked><svg viewBox="0 0 16 16"><use href="#nachweis"/></svg><span>Druckbemessung</span></label></div></li>
                  <li><div class="row"><i class="leaf"></i><label><input type="checkbox" checked><svg viewBox="0 0 16 16"><use href="#nachweis"/></svg><span>Plastische Bemessung</span></label></div></li>
                </ul></li></ul></li>
          </ul>
          <div class="sb"><svg viewBox="0 0 8 6"><path d="M0 5l4-4 4 4" fill="none" stroke="#555" stroke-width="2"/></svg><i class="thumb"></i><svg viewBox="0 0 8 6"><path d="M0 1l4 4 4-4" fill="none" stroke="#555" stroke-width="2"/></svg></div>
        </div>
      </div>
      <div class="navtabs">
        <button><svg viewBox="0 0 16 16"><path d="M0 4h6v10H0z" fill="#f3c93a" stroke="#a8821a"/><path d="M4 1h12v9H4z" fill="#fff" stroke="#3b67b5"/><path d="M4 0h12v3H4z" fill="#4f86dd"/><circle cx="9" cy="9" r="3.500" fill="#cfe2f8" stroke="#555"/><path d="M12 12l3 3" stroke="#974" stroke-width="2"/></svg>Daten</button>
        <button><svg viewBox="0 0 16 16"><path d="M1.500 3.500h12v12h-12z" fill="#fff" stroke="#3a5fae" stroke-width="1.500"/><path d="M4 8h7M4 10.500h7M4 13h7" stroke="#46a"/><path d="M4 1l8-1 4 3-4 4-7-2z" fill="#8d7060" stroke="#43352c"/></svg>Zeigen</button>
        <button><svg viewBox="0 0 16 16"><path d="M1 14h13M3 11l5-9 3 1-3 9z" fill="#7da3ea" stroke="#274b9c" stroke-width="1.500"/><path d="M10 3c3 3 3 7 1 10" fill="none" stroke="#3a63bd" stroke-width="2"/></svg>Ansichten</button>
        <button class="act"><svg viewBox="0 0 16 16"><path d="M1 7c1-3 4-5 7-5l7 4-8 7-5-2z" fill="url(#rainbow)" stroke="#222"/></svg>Ergebnisse</button>
      </div>
    </aside>

    <section class="center">
      <div class="view">
        <svg class="scene" fill="none">
          <g transform="translate(-307 -110)">
            <path d="M544 108v860" stroke="#b8cccc" stroke-width="2"/>
            <path d="M306 615l238 73.500M1198 891l178 55" stroke="#2a8484"/>
            <path d="M414 183h1m-1 155h1m-1 155h1m-1 155h1m-1 155h1M543 378h1m-1 155h1m-1 311h1M672 418h1m-1 155h1m-1 311h1M802 148h1m-1 310h1m-1 155h1m-1 311h1M931 188h1m-1 310h1m-1 156h1M1060 228h1m-1 310h1m-1 156h1M1189 113h1m-1 155h1m-1 311h1m-1 155h1M1318 153h1m-1 155h1m-1 155h1m-1 155h1m-1 155h1" stroke="#000" transform="translate(0 .5)"/>
            <use href="#supl"/><use href="#beam"/><use href="#supl2"/><use href="#supr"/>
            <path d="M1195 414l18 3m-14 0l12-4" stroke="#2f2"/>
            <path d="M1168 448l22-7 19 7-18 8z" fill="#1aa51a" opacity=".75"/>
            <path d="M673 263v110M802 304v32M931 343v76M1060 384v105" stroke="#2020ff" stroke-width="2" opacity=".3"/>
            <path d="M608.500 243v156M737.500 284v68M866.500 323v51M995.500 364v93M1124.500 404v109" stroke="#00f"/>
            <path d="M555 251l53.500 148 64.500-26.500 64.500-20.500 64.500-16 64.500 38 64.500 45 64.500 38.500 64.500 31.500 64.500 24 49.500-67" stroke="#2424ff" stroke-dasharray="5 1"/>
            <g transform="translate(0 466)"><use href="#supl"/><use href="#beam"/><use href="#supl2"/><use href="#supr"/></g>
            <path d="M1168 915l23 6M1196 908l14 5" stroke="#2e2" stroke-width="1.500"/>
            <path d="M673 729v22M802 770v46M931 809v47M1060 850v22" stroke="#2020ff" stroke-width="2" opacity=".3"/>
            <path d="M608.500 709v40M737.500 750v36M866.500 789v52M995.500 830v36M1124.500 870v39" stroke="#00f"/>
            <path d="M583 725l25.500 24 64.500 2.500 64.500 34 64.500 30.500 64.500 25 64.500 15 64.500 10 64.500 6.500 64.500 37 26-8.500" stroke="#2424ff" stroke-dasharray="5 1"/>
            <path d="M545 689l20 19M1166 896l12-5" stroke="#0000b8"/>
            <g transform="translate(362 824)"><use href="#ucs"/></g>
            <g transform="translate(544 689)"><use href="#ucs"/></g>
            <g class="lab" text-anchor="middle">
              <text x="608" y="412">0.41</text><text x="866" y="854">0.13</text>
              <text x="362" y="874">Z</text><text x="544" y="739">Z</text>
              <text class="red" x="401" y="840">X</text><text class="red" x="582" y="705">X</text>
              <text class="grn" x="330" y="842">Y</text><text class="grn" x="512" y="707">Y</text>
            </g>
          </g>
        </svg>
        <div class="vt"><p>Max Nachweis [-]</p><p>RF-STAHL EC3 FA1 - Bemessung nach Eurocode 3</p></div>
        <p class="vb">Max Nachweis: 0.41</p>
      </div>

      <div class="tablepane">
        <header class="cap"><h2>1.7 Knotenlager</h2><button aria-label="Anheften"><svg viewBox="0 0 10 11"><use href="#pin"/></svg></button><button aria-label="Schließen"><svg viewBox="0 0 10 10"><use href="#cross"/></svg></button></header>
        <div class="ttb">
          <button class="tb on" aria-label="Strukturdaten"><svg viewBox="0 0 16 16"><use href="#tbl"/><path d="M2 14L13 5v9z" fill="#8fd68a" stroke="#2a8a33"/></svg></button>
          <button class="tb" aria-label="Lastfälle"><svg viewBox="0 0 16 16"><use href="#tbl"/><path d="M5 5v8M3 11l2 3 2-3M8 10h6M11 7v6" fill="none" stroke="#1f3c8a" stroke-width="1.500"/></svg></button>
          <button class="tb" aria-label="Lasten"><svg viewBox="0 0 16 16"><use href="#tbl"/><path d="M6 4h4v6h3l-5 5-5-5h3z" fill="#4a72c4" stroke="#234"/></svg></button>
          <button class="tb" aria-label="Ergebnisse"><svg viewBox="0 0 16 16"><use href="#tbl"/><path d="M0 13l7-3H0z" fill="#22d"/><path d="M16 6l-7 3h7z" fill="#d22"/><path d="M0 13L16 6" stroke="#a25"/></svg></button>
          <button class="tb dim" aria-label="Verläufe"><svg viewBox="0 0 16 16"><use href="#tbl"/><path d="M0 10l2-4 3 7 3-7 3 7 3-7 2 4" fill="none" stroke="#c22"/></svg></button>
          <i class="sep"></i>
          <button class="tb" aria-label="Zurück"><svg viewBox="0 0 16 16"><use href="#grd"/><path d="M1 8l5-4v2h9v4H6v2z" fill="#6d9be8" stroke="#1f3f88"/></svg></button>
          <button class="tb" aria-label="Vor"><svg viewBox="0 0 16 16"><use href="#grd"/><path d="M15 8l-5-4v2H1v4h9v2z" fill="#6d9be8" stroke="#1f3f88"/></svg></button>
          <i class="sep"></i>
          <button class="tb on" aria-label="Synchron Auswahl"><svg viewBox="0 0 16 16"><path d="M5 2h4c6 2 6 9 0 12 2-3 2-5 1-7H7V5H5z" fill="#889cc4" stroke="#223"/></svg></button>
          <button class="tb on" aria-label="Synchron Grafik"><svg viewBox="0 0 16 16"><path d="M13 2H8C2 4 2 11 7 14v-4h3L8 7l1-2h4z" fill="#889cc4" stroke="#223"/></svg></button>
          <button class="tb dim" aria-label="Aktualisieren"><svg viewBox="0 0 16 16"><path d="M7 2C1 4 1 11 5 13M9 14c6-2 6-9 2-11M5 10v4H1M11 6V2h4" fill="none" stroke="#678" stroke-width="2"/></svg></button>
          <i class="sep"></i>
          <button class="tb dim" aria-label="Zeile einfügen"><svg viewBox="0 0 16 16"><use href="#grd"/><path d="M8 3v10M3 8h10" stroke="#57c" stroke-width="4"/></svg></button>
          <button class="tb dim" aria-label="Zeile leeren"><svg viewBox="0 0 16 16"><use href="#grd"/><path d="M4 4l8 8M12 4l-8 8M8 4v8" stroke="#57c" stroke-width="3"/></svg></button>
          <button class="tb dim" aria-label="Zeile kopieren"><svg viewBox="0 0 16 16"><use href="#grd"/><path d="M6 5h4M6 11h4" stroke="#57c" stroke-width="4"/></svg></button>
          <i class="sep"></i>
          <button class="tb dim" aria-label="Tabelle leeren"><svg viewBox="0 0 16 16"><use href="#grd"/><path d="M3 3l10 10M13 3L3 13" stroke="#46a" stroke-width="2"/></svg></button>
          <i class="sep"></i>
          <button class="tb" aria-label="Löschen"><svg viewBox="0 0 16 16"><path d="M0 3h6v2H0zM0 11h6v2H0z" fill="#999"/><path d="M1 6h7v4H1z" fill="#bbb" stroke="#555"/><path d="M6 3l9 9M15 3l-9 9" stroke="#c22" stroke-width="2.500"/></svg></button>
          <button class="tb" aria-label="Spalte links"><svg viewBox="0 0 16 16"><path d="M3 2h6v2H3zM3 11h6v2H3zM11 5.500h5v3h-5z" fill="#aaa" stroke="#777" stroke-width=".6"/><path d="M0 7.500l4-3v2h6v2H4v2z" fill="#d22"/></svg></button>
          <button class="tb" aria-label="Spalte rechts"><svg viewBox="0 0 16 16"><path d="M1 2h6v2H1zM1 11h6v2H1zM1 5.500h6v4H1z" fill="#aaa" stroke="#777" stroke-width=".6"/><path d="M16 7.500l-4-3v2H6v2h6v2z" fill="#d22"/></svg></button>
          <i class="sep"></i>
          <button class="tb" aria-label="Farben"><svg viewBox="0 0 16 16"><path d="M.5.5h15v15H.5z" fill="#fff" stroke="#444"/><path d="M1 1h14v6H1z" fill="#e8e46c"/><path d="M1 3.500h14M5.500 1v6M10.500 1v6" stroke="#888"/></svg></button>
          <button class="tb" aria-label="Filter"><svg viewBox="0 0 16 16"><path d="M0 1h16v14H0z" fill="#eef"/><path d="M0 2h16v2H0zM0 5h16v3H0zM0 9h16v3H0zM0 13h16v2H0z" fill="#8388cf"/><path d="M5.500 1v14M10.500 1v14" stroke="#dde"/></svg></button>
          <i class="sep"></i>
          <button class="tb dim" aria-label="Bearbeiten"><svg viewBox="0 0 16 16"><use href="#grd"/><path d="M12 0v7c0 4-3 5-6 4" fill="none" stroke="#d5bd16" stroke-width="3"/></svg></button>
          <i class="sep"></i>
          <button class="tb" aria-label="Eigenschaften"><svg viewBox="0 0 16 16"><path d="M1.500 5.500h13v10h-13z" fill="#fff" stroke="#555"/><path d="M3 9h4M3 12h4M9 9h4M9 12h4" stroke="#555"/><path d="M4 2l8-1 4 3-5 3-6-1z" fill="#b58a6a" stroke="#54402f"/></svg></button>
          <button class="tb" aria-label="Suchen"><svg viewBox="0 0 16 16"><g fill="none" stroke="#4b5f9d" stroke-width="2"><circle cx="4" cy="8" r="2.500"/><circle cx="10" cy="10" r="2.500"/><path d="M6 9h2M5 3L2 7M15 3l-3 7"/></g></svg></button>
          <button class="tb" aria-label="Excel"><svg viewBox="0 0 16 16"><path d="M1 1h14v14H1z" fill="#fff" stroke="#1f7a35" stroke-width="2"/><path d="M4 4l7 8M11 4l-7 8" stroke="#1f7a35" stroke-width="2"/></svg></button>
          <button class="tb" aria-label="Rechner"><svg viewBox="0 0 16 16"><path d="M1 3h14v11H1z" fill="#555"/><path d="M3 5h9" stroke="#cde" stroke-width="2"/><path d="M3 9h10M3 12h10" stroke="#ddd" stroke-width="1.500" stroke-dasharray="2 1"/></svg></button>
          <i class="sep"></i>
          <button class="tb" aria-label="Formel"><svg viewBox="0 0 16 16"><path d="M6.500.5h9v7h-9z" fill="#fff" stroke="#555"/><path d="M6 0h10v3H6z" fill="#34549b"/><text x="0" y="15" class="t8 b it">ab=</text></svg></button>
          <button class="tb" aria-label="Funktion"><svg viewBox="0 0 16 16"><text x="2" y="12" class="t15 it b">fx</text></svg></button>
          <button class="tb dim" aria-label="Funktion löschen"><svg viewBox="0 0 16 16"><text x="4" y="13" class="t15 it">fx</text><path d="M0 0l7 6M7 0L0 7" stroke="#d22" stroke-width="1.500"/></svg></button>
        </div>
        <div class="gridwrap">
          <table class="grid">
            <colgroup><col class="c0"><col class="cA"><col class="cB"><col class="cC"><col class="cn"><col class="cn"><col class="cn"><col class="cn"><col class="cn"><col class="cn"><col></colgroup>
            <thead>
              <tr class="let"><th rowspan="3" class="corner">Lager<br>Nr.</th><th>A</th><th>B</th><th>C</th><th>D</th><th class="hot">E</th><th>F</th><th>G</th><th>H</th><th>I</th><th>J</th></tr>
              <tr class="grp"><th></th><th></th><th>Stütze</th><th colspan="3">Stützung bzw. Feder [kN/m]</th><th colspan="3">Einspannung bzw. Feder [kNm/rad]</th><th></th></tr>
              <tr class="nam"><th>An Knoten Nr.</th><th>Achsensystem</th><th>in Z</th><th>u<small>X</small></th><th>u<small>Y</small></th><th>u<small>Z</small></th><th>φ<small>X</small></th><th>φ<small>Y</small></th><th>φ<small>Z</small></th><th>Kommentar</th></tr>
            </thead>
            <tbody>
              <tr><th>1</th><td>1,3</td><td>Global X,Y,Z</td><td class="k"><input type="checkbox" aria-label="Stütze 1"></td><td class="k"><input type="checkbox" aria-label="uX 1" checked></td><td class="k"><input type="checkbox" aria-label="uY 1" checked></td><td class="k"><input type="checkbox" aria-label="uZ 1" checked></td><td class="k"><input type="checkbox" aria-label="phiX 1" checked></td><td class="k"><input type="checkbox" aria-label="phiY 1"></td><td class="k"><input type="checkbox" aria-label="phiZ 1" checked></td><td></td></tr>
              <tr><th class="hot">2</th><td>4</td><td>Global X,Y,Z</td><td class="k"><input type="checkbox" aria-label="Stütze 2"></td><td class="k"><input type="checkbox" aria-label="uX 2"></td><td class="k cur">10.000</td><td class="k"><input type="checkbox" aria-label="uZ 2" checked></td><td class="k"><input type="checkbox" aria-label="phiX 2" checked></td><td class="k"><input type="checkbox" aria-label="phiY 2"></td><td class="k"><input type="checkbox" aria-label="phiZ 2" checked></td><td></td></tr>
              <tr><th>3</th><td>2</td><td>Global X,Y,Z</td><td class="k"><input type="checkbox" aria-label="Stütze 3"></td><td class="k"><input type="checkbox" aria-label="uX 3"></td><td class="k"><input type="checkbox" aria-label="uY 3" checked></td><td class="k"><input type="checkbox" aria-label="uZ 3" checked></td><td class="k"><input type="checkbox" aria-label="phiX 3" checked></td><td class="k"><input type="checkbox" aria-label="phiY 3"></td><td class="k"><input type="checkbox" aria-label="phiZ 3" checked></td><td></td></tr>
              <tr><th>4</th><td></td><td></td><td></td><td></td><td></td><td></td><td></td><td></td><td></td><td class="off"></td></tr>
              <tr><th>5</th><td></td><td></td><td></td><td></td><td></td><td></td><td></td><td></td><td></td><td class="off"></td></tr>
            </tbody>
          </table>
          <div class="sb full"><svg viewBox="0 0 8 6"><path d="M0 5l4-4 4 4" fill="none" stroke="#555" stroke-width="2"/></svg><i class="thumb"></i><svg viewBox="0 0 8 6"><path d="M0 1l4 4 4-4" fill="none" stroke="#555" stroke-width="2"/></svg></div>
        </div>
        <div class="tabs">
          <button>Knoten</button><button>Linien</button><button>Materialien</button><button>Flächen</button><button>Volumenkörper</button><button>Öffnungen</button><button class="act">Knotenlager</button><button>Linienlager</button><button>Flächenlager</button><button>Liniengelenke</button><button>Querschnitte</button><button>Stabendgelenke</button><button>Stabexzentrizitäten</button><button>Stabteilungen</button><button>Stäbe</button><button>Stabbettungen</button>
          <div class="pager">
            <button aria-label="Erste"><svg viewBox="0 0 10 10"><path d="M1 1h1.500v8H1zM8 1v8L4 5z" fill="#999"/></svg></button><button aria-label="Zurück"><svg viewBox="0 0 10 10"><path d="M7 1v8L3 5z" fill="#999"/></svg></button><button aria-label="Weiter"><svg viewBox="0 0 10 10"><path d="M3 1v8l4-4z"/></svg></button><button aria-label="Letzte"><svg viewBox="0 0 10 10"><path d="M2 1v8l4-4zM7.500 1H9v8H7.500z"/></svg></button>
          </div>
        </div>
      </div>
    </section>

    <aside class="panel">
      <div class="dock">
        <header class="cap"><h2>Panel</h2><button aria-label="Anheften"><svg viewBox="0 0 10 11"><use href="#pin"/></svg></button><button aria-label="Schließen"><svg viewBox="0 0 10 10"><use href="#cross"/></svg></button></header>
        <div class="pbody">
          <p>Max</p><p>Nachweis [-]</p>
          <div class="legend"><div class="scale"><i></i><span>0.41</span><span>0.00</span></div></div>
          <dl class="mm"><dt>Max</dt><dd>:</dd><dd>0.41</dd><dt>Min</dt><dd>:</dd><dd>0.00</dd></dl>
          <button class="go">RF-STAHL EC3</button>
          <button class="find" aria-label="Details"><svg viewBox="0 0 16 14"><path d="M0 1h12M0 3.500h12M0 6h6M0 8.500h5" stroke="#777"/><circle cx="8.500" cy="7" r="3.500" fill="#c6d9f4" stroke="#4f6aa6" stroke-width="1.500"/><path d="M11 10l4 4" stroke="#4f6aa6" stroke-width="2.500"/></svg></button>
        </div>
      </div>
      <div class="ptabs">
        <button class="act" aria-label="Farbskala"><svg viewBox="0 0 16 16"><path d="M1 0h7v3H1z" fill="#f00"/><path d="M1 3h7v3H1z" fill="#f90"/><path d="M1 6h7v3H1z" fill="#0e0"/><path d="M1 9h7v3H1z" fill="#0cf"/><path d="M1 12h7v3H1z" fill="#00f"/><path d="M10.500 1.500h3v2h-3zM10.500 5.500h3v2h-3zM10.500 9.500h3v2h-3zM10.500 13.500h3v2h-3z" fill="none" stroke="#888"/></svg></button>
        <button aria-label="Faktoren"><svg viewBox="0 0 16 16"><path d="M8 1v12M2 3h12M4 14h8" stroke="#6a5514" stroke-width="2"/><path d="M3 4l-2 6h5zM13 4l-3 6h5z" fill="#e5c74e" stroke="#6a5514"/></svg></button>
        <button aria-label="Filter"><svg viewBox="0 0 16 16"><use href="#micro"/></svg></button>
      </div>
    </aside>
  </main>

  <footer class="status">
    <div class="flags"><span>FANG</span><span>RASTER</span><span>KARTES</span><span>OFANG</span><span>HLINIEN</span><span>DXF</span></div>
    <i class="w190"></i><i class="w88"></i><i></i><i></i><i></i>
    <svg viewBox="0 0 12 12"><path d="M8 0h2v2H8zM4 4h2v2H4zM8 4h2v2H8zM0 8h2v2H0zM4 8h2v2H4zM8 8h2v2H8z" fill="#777"/></svg>
  </footer>
</div>
</body>
</html>
```

FILE: styles.css
```css
* { box-sizing: border-box; }
body { margin: 0; font: 11px/16px "Liberation Sans", Arial, sans-serif; color: #111; background: #cfd3dc; }
button { font: inherit; color: inherit; border: 0; padding: 0; margin: 0; background: none; }
h1, h2, p, ul, dl, dd { margin: 0; padding: 0; font-weight: normal; }
.defs { position: absolute; width: 0; height: 0; }

.app { min-height: 100vh; display: grid; grid-template-rows: 30px 24px 26px 27px 1fr 21px; border: 1px solid #686868; background: #cfd3dc; }

/* title and menu */
.title { display: flex; align-items: center; gap: 3px; background: #fff; padding-left: 8px; }
.logo { width: 18px; height: 18px; }
.title h1 { font: 11px/18px "Open Sans", sans-serif; color: #000; flex: 1; }
.wctl { display: flex; }
.wctl button { width: 46px; height: 29px; display: grid; place-items: center; }
.wctl svg, .mdi svg { width: 10px; height: 10px; }
.menu { display: flex; align-items: center; padding-left: 4px; font: 11px/16px "Open Sans", sans-serif; }
.menu a { color: #4f5260; text-decoration: none; margin-right: 15px; }
.mlogo { width: 17px; height: 14px; margin: 0 9px 0 1px; }
.menu .grip { height: 12px; }
.mdi { margin-left: auto; display: flex; padding-right: 1px; }
.mdi button { width: 16px; height: 16px; display: grid; place-items: center; padding-top: 4px; }

/* toolbars */
.bars { display: flex; gap: 2px; }
.bar { display: flex; align-items: center; padding: 0 1px 0 5px; background: linear-gradient(#eef1fa, #e3e7f1 40%, #ced2dc); border-bottom: 1px solid #aab0bd; border-radius: 3px; }
.grip { width: 5px; height: 18px; background: repeating-linear-gradient(#fff 0 2px, #a5abb8 2px 3px, transparent 3px 4px) no-repeat 0 0 / 2px 100%; }
.tb { width: 22px; height: 23px; display: grid; place-items: center; border: 1px solid transparent; border-radius: 2px; flex: none; }
.tb svg { width: 16px; height: 16px; }
.tb.on { background: linear-gradient(#fde0b8, #fcc07a 45%, #ffedb0); border-color: #b9a27c; }
.tb.hot, .dd.hot { background: linear-gradient(#fff2c0, #ffd873 45%, #ffe9a0); border: 1px solid #b9a27c; }
.tb.sel { background: #dde2ea; border-color: #8d9aa6; }
.dim svg { opacity: .5; }
.sep { width: 2px; height: 14px; margin: 0 3px; border-left: 1px solid #a6acb8; border-right: 1px solid #fff; flex: none; }
.dd { width: 13px; height: 23px; display: grid; place-items: center; flex: none; }
.dd::before { content: ""; border: 3px solid transparent; border-top-color: #777; border-bottom: 0; }
.lf { width: 215px; height: 20px; border: 0; border-radius: 0; margin: 0 2px 0 2px; padding: 0 16px 0 3px; font: 11px/18px "Open Sans", sans-serif; color: #000; appearance: none;
  background: linear-gradient(#777, #777) no-repeat right 6px center / 5px 1px, linear-gradient(#777, #777) no-repeat right 7px top 10px / 3px 2px, linear-gradient(#dfe3ec, #dfe3ec) no-repeat right 1px center / 13px 18px, #fff; }
.t8 { font: 8px "Liberation Serif", serif; fill: #222; }
.t10 { font: 11px "Liberation Serif", serif; fill: #111; }
.t15 { font: 15px "Liberation Serif", serif; fill: #111; }
.b { font-weight: bold; }
.it { font-style: italic; }
.gry { fill: #888; }

/* docked areas */
.main { display: grid; grid-template-columns: 300px minmax(0, 1fr) 157px; column-gap: 5px; min-height: 0; }
.nav, .panel { display: grid; grid-template-rows: 1fr 24px; }
.dock { display: grid; grid-template-rows: 19px 1fr; border: 1px solid #e6eaf4; border-right-color: #9aa3bb; border-bottom-color: #777c88; }
.cap { display: flex; align-items: center; gap: 7px; padding: 0 5px 1px 3px; height: 19px; background: #b8bfca; border-bottom: 1px solid #a3aab8; color: #484c58; }
.cap h2 { font: 11px/16px "Open Sans", sans-serif; flex: 1; }
.cap button { height: 11px; width: 10px; display: grid; }
.cap svg { width: 10px; height: 10px; }
.treebox { display: grid; grid-template-columns: 1fr 15px; background: #fcfbf3; border: solid #e8ecf5; border-width: 2px 3px 1px 2px; }
.sb { background: #f0f0f0; display: flex; flex-direction: column; align-items: center; padding: 6px 0; }
.sb svg { width: 8px; height: 6px; }
.sb .thumb { width: 15px; height: 17px; margin: 85px 0 auto; background: #cdcdcd; }
.tree, .tree ul { list-style: none; }
.tree { padding-left: 3px; font: 11px/18px "Open Sans", sans-serif; color: #111; }
.tree ul { padding-left: 19px; }
.tree li { position: relative; }
.tree li::before { content: ""; position: absolute; left: 8px; top: 0; bottom: 0; border-left: 1px dotted #777; }
.tree li:last-child::before { bottom: auto; height: 9px; }
.tree > li:first-child::before { top: 9px; }
.row, .row label { display: flex; align-items: center; height: 18px; }
.exp, .leaf { position: relative; width: 21px; height: 18px; flex: none; }
.exp::before, .leaf::before { content: ""; position: absolute; left: 9px; right: 0; top: 9px; border-top: 1px dotted #777; }
.exp::after { content: ""; position: absolute; left: 4px; top: 5px; width: 9px; height: 9px; border: 1px solid #8c8c8c; background: linear-gradient(#3b62b5, #3b62b5) no-repeat center / 5px 1px, #fafafa; }
.row svg { width: 16px; height: 16px; margin: 0 5px 0 2px; }
.row input { appearance: none; width: 13px; height: 13px; margin: 0; border: 1px solid #333; background: linear-gradient(135deg, #dfe3ea, #fff); }
.row input:checked::before, .k input:checked::before { content: ""; display: block; width: 8px; height: 8px; margin: 1px; background: #000; clip-path: polygon(0 35%, 35% 65%, 100% 0, 100% 35%, 35% 100%, 0 65%); }
.navtabs { display: flex; align-items: start; gap: 10px; padding-left: 6px; font: 11px/18px "Open Sans", sans-serif; color: #45495a; }
.navtabs button { display: flex; align-items: center; gap: 3px; height: 22px; }
.navtabs svg { width: 16px; height: 16px; }
.act { background: #eff2f7; }
.navtabs .act, .ptabs .act { border: 1px solid #a9d4dc; border-top: 0; border-radius: 0 0 4px 4px; padding-right: 2px; }

/* work area */
.center { display: grid; grid-template-columns: minmax(0, 1fr); grid-template-rows: 1fr 224px; row-gap: 5px; min-width: 0; }
.view { position: relative; background: #fcfcfc; border: solid #6c6c6c; border-width: 2px 1px 1px 1px; border-right-color: #fff; border-bottom-color: #ddd; overflow: hidden; min-height: 300px; }
.scene { position: absolute; inset: 0; width: 100%; height: 100%; }
.vt, .vb { position: absolute; left: 4px; color: #000; line-height: 14px; }
.vt { top: 4px; }
.vb { bottom: 5px; }
.lab { font: 9px "Liberation Sans", sans-serif; fill: #00f; }
.lab .red { fill: #f00; }
.lab .grn { fill: #0f0; }

.tablepane { display: grid; grid-template-columns: minmax(0, 1fr); grid-template-rows: 19px 26px 143px 18px 1fr; background: #f0f0f0; }
.ttb { display: flex; align-items: center; padding-left: 8px; background: linear-gradient(#eef1fa, #e3e7f1 40%, #ced2dc); }
.gridwrap { display: grid; grid-template-columns: minmax(0, 1fr) 15px; column-gap: 2px; align-items: start; padding: 1px 3px 0 1px; border: solid #666; border-width: 1px 2px 1px 1px; }
.grid { border-collapse: collapse; table-layout: fixed; width: 100%; line-height: 14px; color: #111; }
.c0 { width: 45px; }
.cA { width: 162px; }
.cB { width: 114px; }
.cC { width: 60px; }
.cn { width: 72px; }
.grid th, .grid td { font-weight: normal; padding: 0; border: 1px solid #9c9c9c; overflow: hidden; white-space: nowrap; }
.grid thead th { background: #f0f0f0; }
.grid .let { height: 15px; }
.grid .let th { background: #e1e1e1; border-color: #666; line-height: 12px; }
.grid .let .corner { line-height: 13px; vertical-align: middle; padding-top: 6px; }
.grid .hot, .grid .let .hot { background: #0078d7; color: #fff; }
.grid .grp { height: 16px; }
.grid .grp th { border-bottom: 0; padding-bottom: 1px; }
.grid .nam { height: 17px; }
.grid .nam th { border-top: 0; padding-bottom: 2px; }
.grid small { font-size: 9px; }
.grid tbody tr { height: 16px; }
.grid tbody th { background: #e1e1e1; border-color: #666; }
.grid td { background: #fff; padding-left: 4px; }
.grid .off { background: #f0f0f0; }
.grid .k { text-align: center; padding: 0; }
.grid .cur { outline: 1px dotted #000; outline-offset: -1px; }
.k input { appearance: none; width: 11px; height: 11px; margin: 1px 0 0; border: 1px solid #000; box-shadow: 1px 1px #000; vertical-align: top; }
.k input:checked::before { width: 7px; height: 7px; }
.sb.full { height: 127px; }
.sb.full .thumb { margin: 5px 0; flex: 1; }

.tabs { display: flex; align-items: start; }
.tabs > button { height: 17px; padding: 0 3px 0 4px; background: #e3e3e3; border: solid #666; border-width: 0 1px 1px 0; border-radius: 0 0 4px 4px; white-space: nowrap; line-height: 16px; }
.tabs > .act { background: #fff; }
.pager { display: flex; margin-left: auto; }
.pager button { width: 16px; height: 16px; display: grid; place-items: center; border: 1px solid #fff; border-right-color: #777; border-bottom-color: #777; }
.pager svg { width: 10px; height: 10px; }

/* right panel */
.panel .dock { margin-right: 1px; }
.pbody { background: #f0f0f0; padding: 4px 4px 0 4px; display: flex; flex-direction: column; }
.pbody p { line-height: 17px; }
.legend { height: 215px; padding: 10px 0 10px 43px; background: #faf7f0; border: 1px solid #999; border-right-color: #fff; border-bottom-color: #fff; }
.scale { display: grid; grid-template-columns: 27px 1fr; column-gap: 10px; height: 194px; align-content: space-between; position: relative; }
.scale i { grid-row: 1 / 3; height: 194px; background: #00f; border: 1px solid #000; }
.scale span { line-height: 14px; position: relative; align-self: end; margin-bottom: -6px; }
.scale span:nth-child(2) { align-self: start; margin: -7px 0 0; }
.scale span::before { content: ""; position: absolute; left: -10px; top: 7px; width: 6px; border-top: 1px solid #000; }
.mm { display: grid; grid-template-columns: 26px 12px 1fr; padding: 1px 0 1px 44px; margin-top: 9px; line-height: 17px; background: #f0f4fa; border: 1px solid #dce6f4; border-right-color: #a8a8e8; border-bottom-color: #a8a8e8; }
.go { height: 23px; margin: 18px 3px 0 4px; border: 2px solid #0078d7; background: #e1e1e1; }
.find { width: 25px; height: 21px; margin: 94px -2px 0 auto; display: grid; place-items: center; border: 1px solid #adadad; background: #e1e1e1; }
.find svg { width: 16px; height: 14px; }
.ptabs { display: flex; gap: 8px; padding-left: 3px; align-items: start; }
.ptabs button { width: 22px; height: 22px; display: grid; place-items: center; }
.ptabs svg { width: 16px; height: 16px; }

/* status bar */
.status { display: flex; align-items: center; justify-content: flex-end; background: linear-gradient(#dfe2e9, #a9aeb8 45%, #b9bec8); border-top: 1px solid #9aa0ae; color: #2a2d38; }
.flags { display: flex; gap: 3px; padding-right: 2px; border-right: 1px solid #888e9b; }
.flags span { height: 18px; line-height: 17px; padding: 0 2px 0 1px; border: 1px solid #e4e7ee; border-top-color: #222; border-left-color: #222; }
.status > i { height: 16px; border-right: 1px solid #888e9b; width: 74px; }
.status .w190 { width: 189px; }
.status .w88 { width: 88px; }
.status > i:last-of-type { border: 0; width: 79px; }
.status svg { width: 12px; height: 12px; align-self: end; }
```
